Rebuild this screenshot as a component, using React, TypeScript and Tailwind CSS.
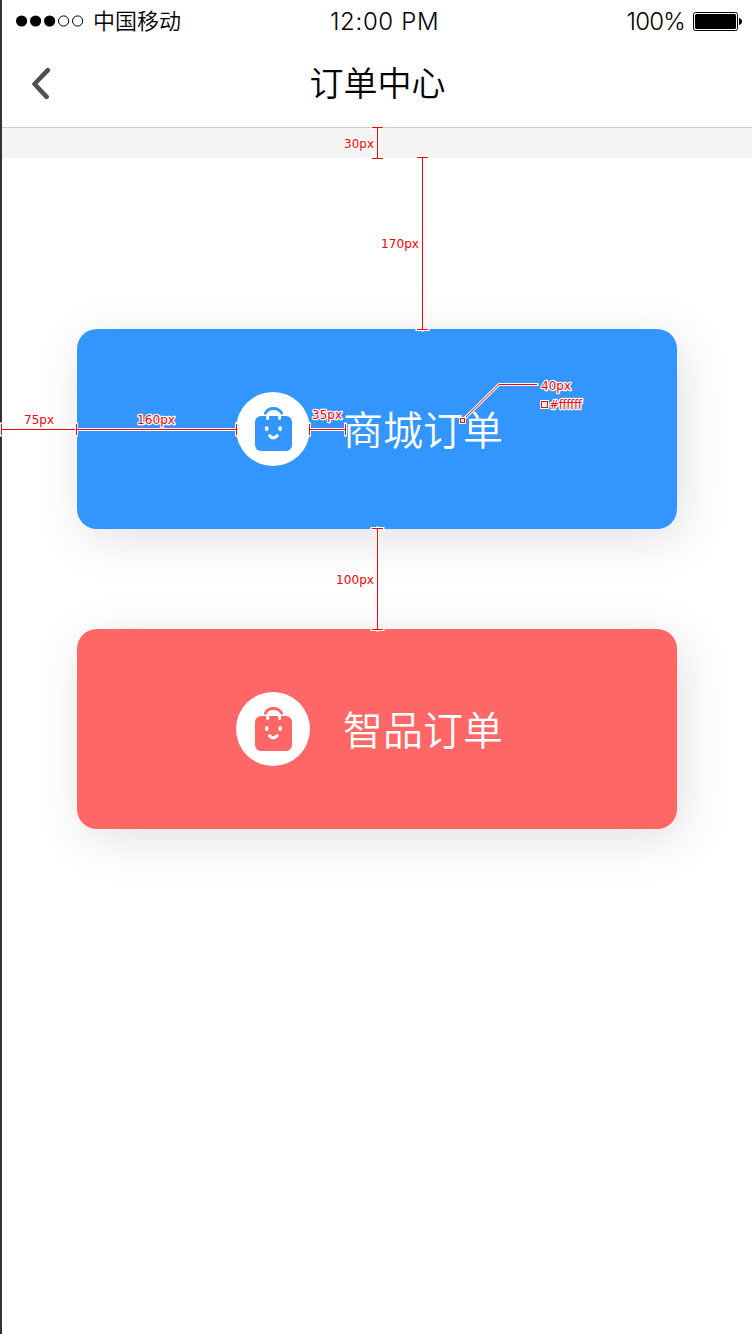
import React from "react";

const cjk = "font-['Noto_Sans_CJK_SC',sans-serif]";

function BagIcon({ color }: { color: string }) {
  return (
    <svg width="74" height="74" viewBox="0 0 74 74" className="block shrink-0" fill="none">
      <circle cx="37" cy="37" r="37" fill="#fff" />
      <path d="M29.3 21.3C30.8 18 34 16.5 37.5 16.5S44 18 45.7 21.3" stroke={color} strokeWidth="2.8" strokeLinecap="round" />
      <rect x="19" y="24" width="37" height="35" rx="6" fill={color} />
      <path d="M31.7 23V26.5M43.6 23V26.5" stroke="#fff" strokeWidth="3" strokeLinecap="round" />
      <ellipse cx="30.7" cy="36.6" rx="1.8" ry="2.6" fill="#fff" />
      <ellipse cx="44.2" cy="36.6" rx="1.8" ry="2.6" fill="#fff" />
      <path d="M33.7 43.8Q37.5 47.8 41.1 43.8" stroke="#fff" strokeWidth="3.2" strokeLinecap="round" />
    </svg>
  );
}

function OrderCard({ label, color, className }: { label: string; color: string; className: string }) {
  return (
    <button
      className={`flex h-[200px] w-[600px] items-center rounded-[20px] pl-[159px] shadow-[6px_10px_50px_rgba(0,0,0,0.12)] ${className}`}
    >
      <BagIcon color={color} />
      <span className={`mb-[2px] ml-[33px] text-[40px] leading-[60px] font-[350] whitespace-nowrap text-white ${cjk}`}>{label}</span>
    </button>
  );
}

const lines = [
  "M377.5 127V158M372 127.5H383M372 158.5H383",
  "M422.5 157V330M417 157.5H428M417 329.5H428",
  "M377.5 528V630M372 528.5H383M372 629.5H383",
  "M1 429.5H75M1.5 424V435",
  "M77 429.5H236M76.5 424V435M236.5 424V435",
  "M310 429.5H345M309.5 424V435M345.5 424V435",
  "M464 419L499 384.5H537",
];

const labels: [string, number, number, number][] = [
  ["30px", 344, 148, 30],
  ["170px", 381, 248, 38],
  ["75px", 24, 424, 30],
  ["160px", 137, 424, 38],
  ["35px", 312, 419, 30],
  ["40px", 541, 390, 30],
  ["#ffffff", 549.5, 409, 32.5],
  ["100px", 336, 584, 38],
];

function Annotations() {
  return (
    <svg width="752" height="1334" className="pointer-events-none absolute top-0 left-0" fill="none">
      {lines.map((d) => (
        <path key={d} d={d} stroke="#fff" strokeWidth="3" strokeLinecap="square" />
      ))}
      {lines.map((d) => (
        <path key={d} d={d} stroke="#f00" strokeWidth="1" />
      ))}
      <rect x="460.5" y="418.5" width="4" height="4" fill="#39f" stroke="#fff" strokeWidth="3" />
      <rect x="460.5" y="418.5" width="4" height="4" stroke="#f00" />
      <rect x="541.5" y="401.5" width="6" height="6" fill="#fff" stroke="#fff" strokeWidth="3" />
      <rect x="541.5" y="401.5" width="6" height="6" stroke="#f00" />
      {labels.map(([text, x, y, width]) => (
        <text
          key={text}
          x={x}
          y={y}
          textLength={width}
          lengthAdjust="spacingAndGlyphs"
          fill="#f00"
          stroke="#fff"
          strokeWidth="2.5"
          strokeLinejoin="round"
          paintOrder="stroke"
          className="font-['DejaVu_Sans',sans-serif] text-[12px]"
        >
          {text}
        </text>
      ))}
    </svg>
  );
}

export default function App() {
  return (
    <div className="relative h-[1334px] w-[752px] border-l-2 border-[#323234] bg-white text-black">
      <div className="grid h-10 grid-cols-3 items-center">
        <div className="flex items-center pl-[14px]">
          <svg width="68" height="12" viewBox="0 0 68 12" fill="none">
            <circle cx="5.6" cy="6" r="5.6" fill="#000" />
            <circle cx="19.6" cy="6" r="5.6" fill="#000" />
            <circle cx="33.6" cy="6" r="5.6" fill="#000" />
            <circle cx="47.6" cy="6" r="5.1" stroke="#000" />
            <circle cx="61.6" cy="6" r="5.1" stroke="#000" />
          </svg>
          <span className={`mb-[4px] ml-[9px] text-[22px] leading-9 font-[350] whitespace-nowrap ${cjk}`}>中国移动</span>
        </div>
        <div className="pt-[2px] pl-[78px] font-['Inter',sans-serif] text-[24px] leading-[40px] font-light tracking-[0.65px] whitespace-nowrap">
          12:00 PM
        </div>
        <div className="flex items-center justify-end pr-[9px]">
          <span className="pt-[2px] font-['Inter',sans-serif] text-[24px] leading-[40px] font-light tracking-[-0.8px] whitespace-nowrap">100%</span>
          <svg width="50" height="20" viewBox="0 0 50 20" className="ml-[8px]" fill="none">
            <rect x="0.5" y="1.5" width="44" height="18" rx="2" stroke="#000" />
            <rect x="2" y="3" width="41" height="15" rx="1.5" fill="#000" />
            <path d="M46 7Q49 8 49 10.5T46 14Z" fill="#000" />
          </svg>
        </div>
      </div>
      <header className="relative flex h-[88px] items-center justify-center border-b border-[#cbcbcb]">
        <svg width="22" height="34" viewBox="0 0 22 34" className="absolute top-[27px] left-[28px]" fill="none">
          <path d="M17.8 3.2L4.5 17L16.6 29.8" stroke="#505050" strokeWidth="4.6" strokeLinecap="round" strokeLinejoin="round" />
        </svg>
        <h1 className={`mb-[4px] pl-[1px] text-[34px] leading-[50px] font-[350] ${cjk}`}>订单中心</h1>
      </header>
      <div className="h-[30px] bg-[#f4f4f4]" />
      <main className="flex flex-col gap-[100px] pt-[171px] pl-[75px]">
        <OrderCard label="商城订单" color="#3396ff" className="bg-[#3396ff]" />
        <OrderCard label="智品订单" color="#ff6666" className="bg-[#ff6666]" />
      </main>
      <div className="absolute top-0 -left-[2px]">
        <Annotations />
      </div>
    </div>
  );
}
